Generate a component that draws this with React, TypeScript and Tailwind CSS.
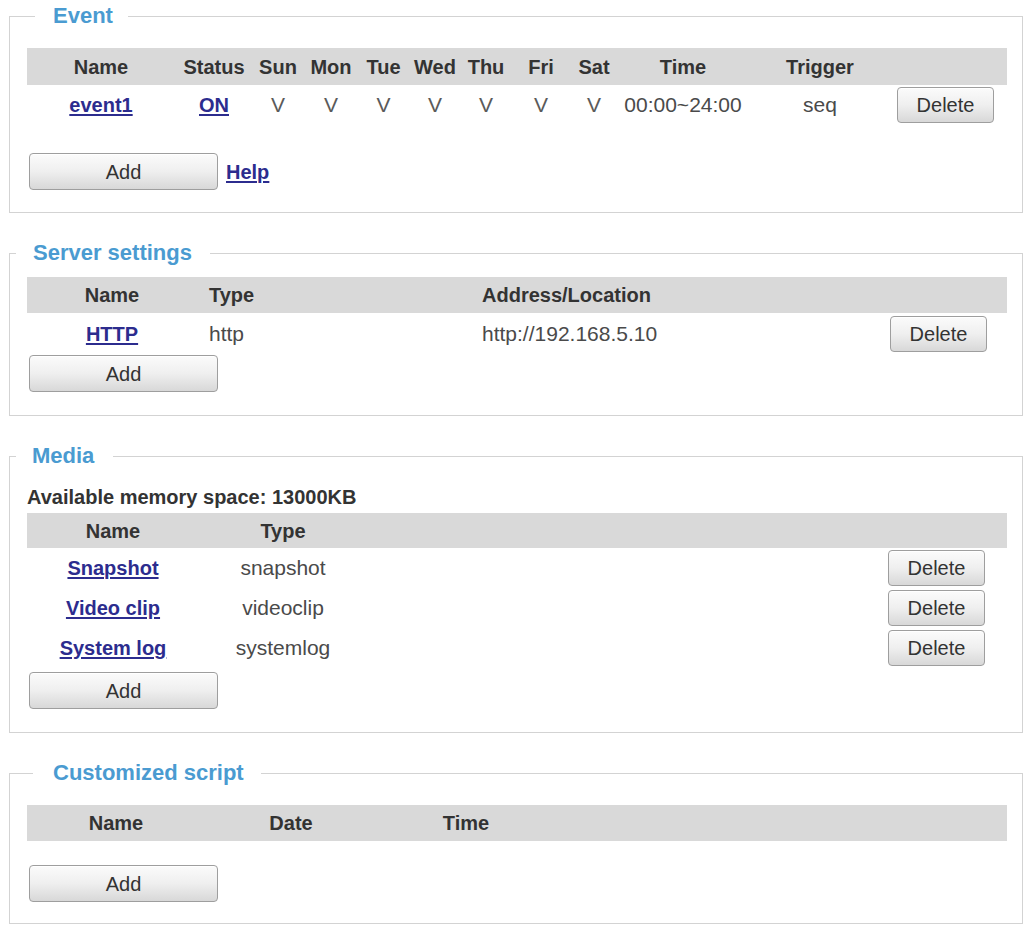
import React from "react";

const btn =
  "rounded-[4px] border border-[#9e9e9e] bg-linear-to-b from-[#fbfbfb] via-[#efefef] to-[#d8d8d8] text-[20px] leading-none text-[#333] shadow-[inset_0_1px_0_#ffffff]";
const link = "font-bold text-[20px] text-[#2c2c8e] underline underline-offset-2";
const th = "p-0 text-[20px] font-bold text-[#333]";
const td = "p-0 text-[21px] text-[#4a4a4a]";

function AddButton() {
  return <button className={`${btn} ml-[2px] h-[37px] w-[189px]`}>Add</button>;
}

function DeleteButton() {
  return <button className={`${btn} h-[36px] w-[97px]`}>Delete</button>;
}

function Box({
  title,
  legendClass,
  children,
}: {
  title: string;
  legendClass: string;
  children: React.ReactNode;
}) {
  return (
    <fieldset className="mb-[27px] border border-[#d3d3d3]">
      <legend
        className={`text-[22px] font-bold leading-[26px] text-[#4a9bd1] ${legendClass}`}
      >
        {title}
      </legend>
      <div className="pl-[17px] pr-[15px]">{children}</div>
    </fieldset>
  );
}

export default function App() {
  const days = ["Sun", "Mon", "Tue", "Wed", "Thu", "Fri", "Sat"];
  return (
    <div className="min-h-screen bg-white pt-[3px] font-['Liberation_Sans',Arial,sans-serif]">
      <div className="ml-[9px] w-[1014px]">
        {/* Event */}
        <Box title="Event" legendClass="ml-[25px] pl-[18px] pr-[15px]">
          <table className="mt-[19px] w-[980px] table-fixed">
            <colgroup>
              <col className="w-[148px]" />
              <col className="w-[78px]" />
              <col className="w-[50px]" />
              <col className="w-[56px]" />
              <col className="w-[49px]" />
              <col className="w-[54px]" />
              <col className="w-[48px]" />
              <col className="w-[62px]" />
              <col className="w-[44px]" />
              <col className="w-[134px]" />
              <col className="w-[140px]" />
              <col className="w-[117px]" />
            </colgroup>
            <thead>
              <tr className="h-[37px] bg-[#d9d9d9] text-center">
                <th className={th}>Name</th>
                <th className={th}>Status</th>
                {days.map((d) => (
                  <th key={d} className={th}>
                    {d}
                  </th>
                ))}
                <th className={th}>Time</th>
                <th className={th}>Trigger</th>
                <th className={th}></th>
              </tr>
            </thead>
            <tbody>
              <tr className="h-[40px] text-center">
                <td className="p-0">
                  <a href="#" className={link}>
                    event1
                  </a>
                </td>
                <td className="p-0">
                  <a href="#" className={link}>
                    ON
                  </a>
                </td>
                {days.map((d) => (
                  <td key={d} className={`${td} text-[#5a5a5a]`}>
                    V
                  </td>
                ))}
                <td className={td}>00:00~24:00</td>
                <td className={td}>seq</td>
                <td className="p-0 pl-[7px] text-left">
                  <DeleteButton />
                </td>
              </tr>
            </tbody>
          </table>
          <div className="mt-[28px] flex items-center gap-[8px] pb-[22px]">
            <AddButton />
            <a href="#" className={link}>
              Help
            </a>
          </div>
        </Box>

        {/* Server settings */}
        <Box title="Server settings" legendClass="ml-[6px] pl-[17px] pr-[18px]">
          <table className="mt-[11px] w-[980px] table-fixed">
            <colgroup>
              <col className="w-[170px]" />
              <col className="w-[273px]" />
              <col className="w-[390px]" />
              <col className="w-[147px]" />
            </colgroup>
            <thead>
              <tr className="h-[36px] bg-[#d9d9d9]">
                <th className={`${th} text-center`}>Name</th>
                <th className={`${th} pl-[12px] text-left`}>Type</th>
                <th className={`${th} pl-[12px] text-left`}>Address/Location</th>
                <th className={th}></th>
              </tr>
            </thead>
            <tbody>
              <tr className="h-[42px]">
                <td className="p-0 text-center">
                  <a href="#" className={link}>
                    HTTP
                  </a>
                </td>
                <td className={`${td} pl-[12px]`}>http</td>
                <td className={`${td} pl-[12px]`}>http://192.168.5.10</td>
                <td className="p-0 pl-[30px]">
                  <DeleteButton />
                </td>
              </tr>
            </tbody>
          </table>
          <div className="pb-[23px]">
            <AddButton />
          </div>
        </Box>

        {/* Media */}
        <Box title="Media" legendClass="ml-[6px] pl-[16px] pr-[19px]">
          <div className="mt-[16px] text-[20px] font-bold leading-[24px] text-[#333]">
            Available memory space: 13000KB
          </div>
          <table className="mt-[4px] w-[980px] table-fixed">
            <colgroup>
              <col className="w-[172px]" />
              <col className="w-[168px]" />
              <col className="w-[493px]" />
              <col className="w-[147px]" />
            </colgroup>
            <thead>
              <tr className="h-[35px] bg-[#d9d9d9] text-center">
                <th className={th}>Name</th>
                <th className={th}>Type</th>
                <th className={th}></th>
                <th className={th}></th>
              </tr>
            </thead>
            <tbody>
              {[
                ["Snapshot", "snapshot"],
                ["Video clip", "videoclip"],
                ["System log", "systemlog"],
              ].map(([name, type]) => (
                <tr key={name} className="h-[40px] text-center">
                  <td className="p-0">
                    <a href="#" className={link}>
                      {name}
                    </a>
                  </td>
                  <td className={td}>{type}</td>
                  <td className="p-0"></td>
                  <td className="p-0 pl-[28px] text-left">
                    <DeleteButton />
                  </td>
                </tr>
              ))}
            </tbody>
          </table>
          <div className="mt-[4px] pb-[23px]">
            <AddButton />
          </div>
        </Box>

        {/* Customized script */}
        <Box title="Customized script" legendClass="ml-[23px] pl-[20px] pr-[17px]">
          <table className="mt-[19px] w-[980px] table-fixed">
            <colgroup>
              <col className="w-[178px]" />
              <col className="w-[172px]" />
              <col className="w-[178px]" />
              <col className="w-[452px]" />
            </colgroup>
            <thead>
              <tr className="h-[36px] bg-[#d9d9d9] text-center">
                <th className={th}>Name</th>
                <th className={th}>Date</th>
                <th className={th}>Time</th>
                <th className={th}></th>
              </tr>
            </thead>
          </table>
          <div className="mt-[24px] pb-[21px]">
            <AddButton />
          </div>
        </Box>
      </div>
    </div>
  );
}
